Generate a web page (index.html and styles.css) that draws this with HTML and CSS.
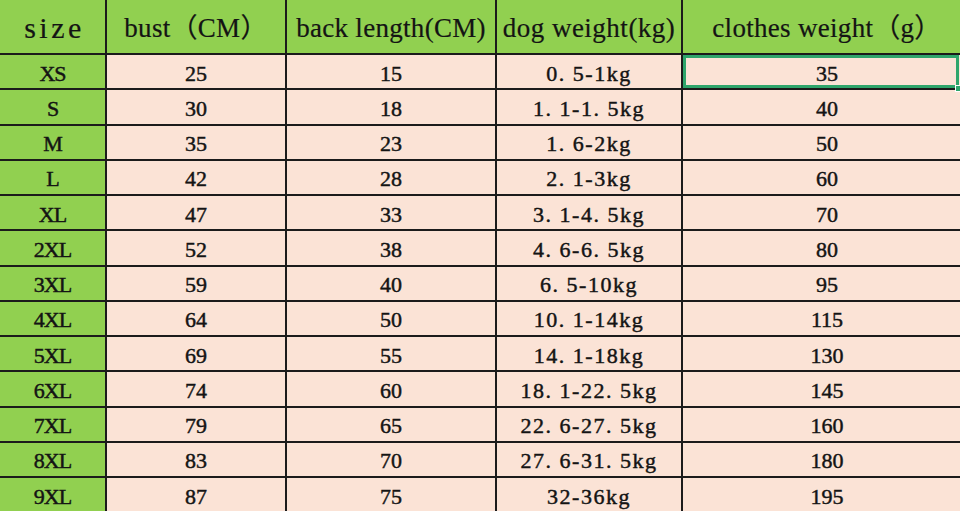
FILE: index.html
```html
<!DOCTYPE html>
<html lang="en">
<head>
<meta charset="utf-8">
<title>Size chart</title>
<link rel="stylesheet" href="styles.css">
</head>
<body>
<div class="sheet">
  <div class="cell head size-head">size</div>
  <div class="cell head">bust（CM）</div>
  <div class="cell head">back length(CM)</div>
  <div class="cell head">dog weight(kg)</div>
  <div class="cell head">clothes weight（g）</div>

  <div class="cell label">XS</div><div class="cell">25</div><div class="cell">15</div><div class="cell">0. 5-1kg</div><div class="cell selected">35</div>
  <div class="cell label">S</div><div class="cell">30</div><div class="cell">18</div><div class="cell">1. 1-1. 5kg</div><div class="cell">40</div>
  <div class="cell label">M</div><div class="cell">35</div><div class="cell">23</div><div class="cell">1. 6-2kg</div><div class="cell">50</div>
  <div class="cell label">L</div><div class="cell">42</div><div class="cell">28</div><div class="cell">2. 1-3kg</div><div class="cell">60</div>
  <div class="cell label">XL</div><div class="cell">47</div><div class="cell">33</div><div class="cell">3. 1-4. 5kg</div><div class="cell">70</div>
  <div class="cell label">2XL</div><div class="cell">52</div><div class="cell">38</div><div class="cell">4. 6-6. 5kg</div><div class="cell">80</div>
  <div class="cell label">3XL</div><div class="cell">59</div><div class="cell">40</div><div class="cell">6. 5-10kg</div><div class="cell">95</div>
  <div class="cell label">4XL</div><div class="cell">64</div><div class="cell">50</div><div class="cell">10. 1-14kg</div><div class="cell">115</div>
  <div class="cell label">5XL</div><div class="cell">69</div><div class="cell">55</div><div class="cell">14. 1-18kg</div><div class="cell">130</div>
  <div class="cell label">6XL</div><div class="cell">74</div><div class="cell">60</div><div class="cell">18. 1-22. 5kg</div><div class="cell">145</div>
  <div class="cell label">7XL</div><div class="cell">79</div><div class="cell">65</div><div class="cell">22. 6-27. 5kg</div><div class="cell">160</div>
  <div class="cell label">8XL</div><div class="cell">83</div><div class="cell">70</div><div class="cell">27. 6-31. 5kg</div><div class="cell">180</div>
  <div class="cell label">9XL</div><div class="cell">87</div><div class="cell">75</div><div class="cell">32-36kg</div><div class="cell">195</div>
</div>
</body>
</html>
```
FILE: styles.css
```css
html, body {
  margin: 0;
  padding: 0;
  width: 960px;
  height: 511px;
  overflow: hidden;
  background: #fbe3d6;
}

.sheet {
  display: grid;
  grid-template-columns: 107px 180px 210px 186px 290px;
  grid-template-rows: 55px repeat(13, 35.25px);
  width: 973px;
  font-family: "Liberation Serif", "Noto Sans CJK SC", serif;
  color: #141414;
}

.cell {
  box-sizing: border-box;
  border-right: 2px solid #1b1b1b;
  border-bottom: 2px solid #1b1b1b;
  background: #fbe3d6;
  display: flex;
  align-items: center;
  justify-content: center;
  padding-top: 4px;
  font-size: 22px;
  line-height: 1;
  font-weight: normal;
  -webkit-text-stroke: 0.45px #141414;
  white-space: nowrap;
}

.cell:nth-child(5n+4) {
  letter-spacing: 1.5px;
}

.head {
  background: #91d050;
  font-size: 27px;
  letter-spacing: 0.3px;
  padding-top: 3px;
  -webkit-text-stroke: 0.2px #141414;
}

.head.cell:nth-child(5n+4) {
  letter-spacing: 0.5px;
}

.size-head {
  font-size: 30px;
  letter-spacing: 3.5px;
  padding-left: 4px;
}

.label {
  background: #91d050;
  letter-spacing: -1px;
}

.selected {
  position: relative;
}

.selected::after {
  content: "";
  position: absolute;
  left: 0;
  top: 0;
  width: 276px;
  bottom: 0;
  box-sizing: border-box;
  border: 3px solid #2ea56b;
}

.selected::before {
  content: "";
  position: absolute;
  left: 272px;
  top: 30px;
  width: 5px;
  height: 5px;
  background: #2ea56b;
  border: 1px solid #fff;
  z-index: 1;
}
```
